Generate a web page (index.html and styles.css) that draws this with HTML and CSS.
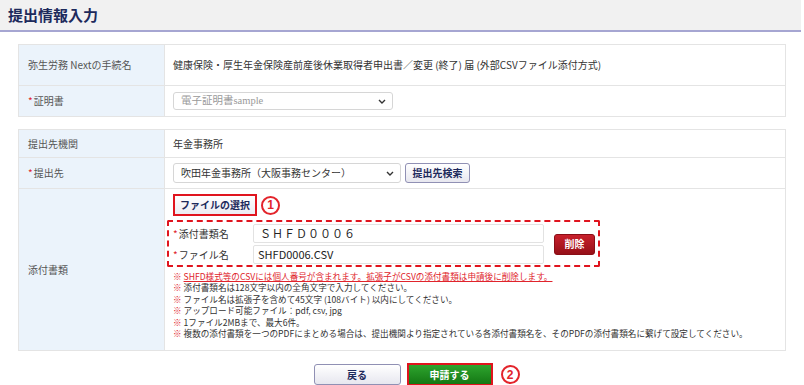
FILE: index.html
```html
<!DOCTYPE html>
<html lang="ja">
<head>
  <meta charset="UTF-8">
  <meta name="viewport" content="width=device-width, initial-scale=1.0">
  <title>提出情報入力</title>
  <link rel="stylesheet" href="styles.css">
</head>
<body>

<div class="page-title">提出情報入力</div>

<div class="content">
  <table class="form-table">
    <tr class="row-tall">
      <th>弥生労務 Nextの手続名</th>
      <td>健康保険・厚生年金保険産前産後休業取得者申出書／変更 (終了) 届 (外部CSVファイル添付方式)</td>
    </tr>
    <tr class="row-mid">
      <th><span class="req">*</span>証明書</th>
      <td>
        <div class="select select-cert">
          <span>電子証明書sample</span>
          <svg width="8" height="5" viewBox="0 0 8 5"><path d="M1 1 L4 4 L7 1" fill="none" stroke="#333" stroke-width="1.4"/></svg>
        </div>
      </td>
    </tr>
  </table>

  <table class="form-table">
    <tr class="row-short">
      <th>提出先機関</th>
      <td>年金事務所</td>
    </tr>
    <tr class="row-mid">
      <th><span class="req">*</span>提出先</th>
      <td>
        <div class="inline-row">
          <div class="select select-office">
            <span>吹田年金事務所（大阪事務センター）</span>
            <svg width="8" height="5" viewBox="0 0 8 5"><path d="M1 1 L4 4 L7 1" fill="none" stroke="#333" stroke-width="1.4"/></svg>
          </div>
          <button class="btn btn-light btn-search">提出先検索</button>
        </div>
      </td>
    </tr>
    <tr class="row-attach">
      <th>添付書類</th>
      <td class="attach-cell">
        <div class="inline-row">
          <button class="btn btn-light btn-file">ファイルの選択</button>
          <span class="mark">1</span>
        </div>

        <div class="attach-box">
          <div class="attach-fields">
            <label><span class="req">*</span>添付書類名</label>
            <div class="text-input wide-chars">ＳＨＦＤ０００６</div>
            <label><span class="req">*</span>ファイル名</label>
            <div class="text-input">SHFD0006.CSV</div>
          </div>
          <button class="btn btn-delete">削除</button>
        </div>

        <ul class="notes">
          <li class="warn"><span class="kome">※</span> <u>SHFD様式等のCSVには個人番号が含まれます。拡張子がCSVの添付書類は申請後に削除します。</u></li>
          <li><span class="kome">※</span> 添付書類名は128文字以内の全角文字で入力してください。</li>
          <li><span class="kome">※</span> ファイル名は拡張子を含めて45文字 (108バイト) 以内にしてください。</li>
          <li><span class="kome">※</span> アップロード可能ファイル：pdf, csv, jpg</li>
          <li><span class="kome">※</span> 1ファイル2MBまで、最大6件。</li>
          <li><span class="kome">※</span> 複数の添付書類を一つのPDFにまとめる場合は、提出機関より指定されている各添付書類名を、そのPDFの添付書類名に繋げて設定してください。</li>
        </ul>
      </td>
    </tr>
  </table>

  <div class="actions">
    <button class="btn btn-light btn-back">戻る</button>
    <div class="submit-wrap">
      <button class="btn btn-submit">申請する</button>
      <span class="mark mark-side">2</span>
    </div>
  </div>
</div>

</body>
</html>
```

FILE: styles.css
```css
body, html {
  margin: 0;
  padding: 0;
  background: #fff;
  font-family: "Noto Sans CJK JP", "Liberation Sans", sans-serif;
  font-size: 10px;
  color: #333;
  overflow: hidden;
}

.page-title {
  height: 30px;
  line-height: 30px;
  margin-right: 3px;
  padding-left: 8px;
  background: #f1f1f1;
  border-bottom: 2px solid #a6a6d2;
  font-size: 15px;
  font-weight: bold;
  color: #1d2a5c;
}

.content {
  padding: 12px 18px 0;
}

.form-table {
  width: 768px;
  border-collapse: collapse;
  margin-bottom: 12px;
}

.form-table th,
.form-table td {
  border: 1px solid #e4e4e4;
  padding: 0 8px;
  vertical-align: middle;
  line-height: 14px;
}

.form-table th {
  width: 128px;
  padding-left: 9px;
  background: #ebf3fb;
  text-align: left;
  font-weight: normal;
  color: #555;
}

.row-tall td, .row-tall th { height: 40px; }
.row-mid td, .row-mid th { height: 30px; }
.row-short td, .row-short th { height: 27px; }
.row-attach td, .row-attach th { height: 156px; }

.req {
  color: #e0242c;
  margin-right: 1px;
}

.select {
  display: flex;
  align-items: center;
  justify-content: space-between;
  box-sizing: border-box;
  padding: 0 6px 0 7px;
  border: 1px solid #d6d6d6;
  border-radius: 3px;
  background: #fff;
}

.select-cert {
  width: 220px;
  height: 18px;
  color: #999;
  font-family: "Liberation Serif", "Noto Sans CJK JP", serif;
  font-size: 10.5px;
}

.select-office {
  width: 228px;
  height: 20px;
}

.inline-row {
  display: flex;
  align-items: center;
}

.btn {
  font-family: "Noto Sans CJK JP", "Liberation Sans", sans-serif;
  font-size: 10px;
  font-weight: bold;
  line-height: 12px;
  cursor: pointer;
  border-radius: 3px;
  padding: 0;
}

.btn-light {
  background: linear-gradient(#ffffff, #e7e7ef);
  border: 1px solid #9090b4;
  color: #1d2a5c;
}

.btn-search {
  width: 65px;
  height: 20px;
  margin-left: 4px;
}

.row-attach td.attach-cell {
  vertical-align: top;
  padding: 5px 8px 0 2px;
}

.btn-file {
  width: 84px;
  height: 22px;
  margin-left: 6px;
  border: 2px solid #e0141e;
  border-radius: 0;
  background: linear-gradient(#ffffff, #ececf2);
}

.mark {
  display: inline-flex;
  align-items: center;
  justify-content: center;
  box-sizing: border-box;
  width: 19px;
  height: 19px;
  margin-left: 4px;
  border: 2px solid #e3242b;
  border-radius: 50%;
  color: #e3242b;
  font-family: "Liberation Sans", sans-serif;
  font-size: 12px;
  font-weight: bold;
  line-height: 1;
}

.attach-box {
  display: flex;
  align-items: center;
  width: 433px;
  box-sizing: border-box;
  margin-top: 4px;
  padding: 2px 2px 1px 4px;
  border: 2px dashed #e0141e;
  border-radius: 2px;
}

.attach-fields {
  display: grid;
  grid-template-columns: 80px 291px;
  row-gap: 2px;
  align-items: center;
}

.attach-fields label {
  color: #333;
}

.text-input {
  box-sizing: border-box;
  height: 19px;
  line-height: 17px;
  padding-left: 4px;
  border: 1px solid #e2e2e2;
  border-radius: 2px;
  background: #fff;
  font-size: 11px;
  color: #222;
}

.wide-chars {
  letter-spacing: 1px;
  padding-left: 6px;
}

.btn-delete {
  width: 41px;
  height: 21px;
  margin-left: 10px;
  border: 1px solid #8a0e16;
  background: linear-gradient(#c8202c, #961018);
  color: #fff;
}

.notes {
  list-style: none;
  margin: 4px 0 0 6px;
  padding: 0;
  font-size: 8.6px;
  line-height: 11.4px;
  color: #333;
}

.notes .kome {
  color: #e0242c;
}

.notes .warn {
  color: #e0242c;
}

.actions {
  display: flex;
  justify-content: center;
  gap: 6px;
  margin-top: 2px;
  padding-left: 2px;
}

.btn-back {
  width: 87px;
  height: 21px;
  margin-top: 1px;
}

.submit-wrap {
  position: relative;
}

.btn-submit {
  width: 86px;
  height: 23px;
  border: 2px solid #e0141e;
  border-radius: 0;
  background: linear-gradient(#2ea42e, #147814);
  color: #fff;
}

.mark-side {
  position: absolute;
  left: 90px;
  top: 2px;
}
```
